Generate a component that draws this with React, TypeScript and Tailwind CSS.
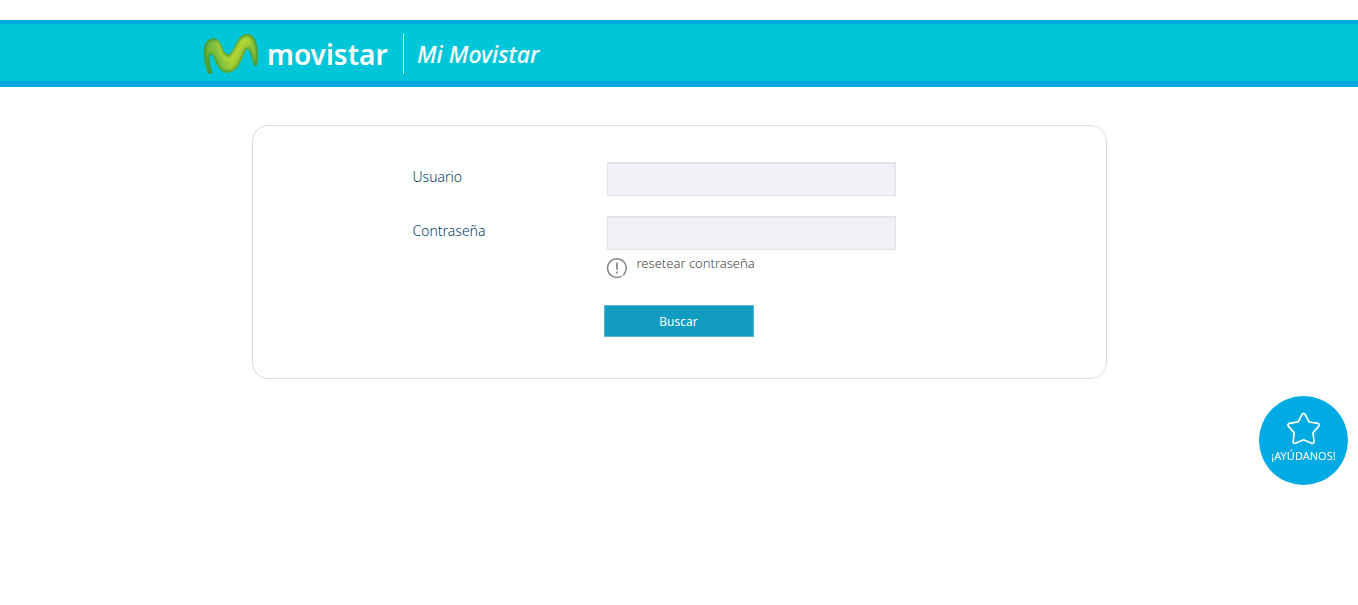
import React from "react";

const ribbon =
  "M30 132C24 132 21 124 18 112C11 88 9 64 14 47C19 32 31 25 42 25C55 25 60 37 67 53C73 65 77 73 84 73C93 72 99 59 106 45C115 27 126 13 142 12C158 12 167 27 171 46C174 64 175 88 172 103C170 111 164 110 161 103C157 92 154 76 148 62C145 54 140 54 136 63C130 78 124 97 113 111C103 122 93 128 81 128C66 127 56 115 48 98C43 87 39 75 34 73C29 72 27 82 29 95C31 109 36 120 36 127C36 131 33 133 30 132Z";

function MovistarMark() {
  return (
    <svg viewBox="9 9 168 126" className="h-[42px] w-14 shrink-0" aria-hidden="true">
      <defs>
        <linearGradient id="leaf" x1="0" y1="0" x2="1" y2="0">
          <stop offset="0" stopColor="#69b33a" />
          <stop offset="0.2" stopColor="#80c141" />
          <stop offset="0.38" stopColor="#8ac63c" />
          <stop offset="0.52" stopColor="#a5d033" />
          <stop offset="0.8" stopColor="#a6cf35" />
          <stop offset="1" stopColor="#7fbd38" />
        </linearGradient>
        <clipPath id="ribbon-shape">
          <path d={ribbon} />
        </clipPath>
        <filter id="soft">
          <feGaussianBlur stdDeviation="4" />
        </filter>
      </defs>
      <path d={ribbon} fill="url(#leaf)" />
      <g clipPath="url(#ribbon-shape)">
        <path d={ribbon} fill="none" stroke="#2f8733" strokeWidth="9" filter="url(#soft)" opacity="0.85" />
        <path
          d="M53 38C60 58 67 82 79 90C94 98 104 76 113 57C120 40 130 28 143 27"
          fill="none"
          stroke="#b5da38"
          strokeWidth="10"
          strokeLinecap="round"
          filter="url(#soft)"
          opacity="0.8"
        />
      </g>
    </svg>
  );
}

const field =
  "h-[34px] w-full rounded-none border border-t-2 border-[#e2e3e8] bg-[#f0f1f6] px-2 text-sm text-[#0b4a70] outline-none focus:border-[#119bc0]";

export default function App() {
  return (
    <div className="min-h-screen bg-white pt-5 font-['Noto_Sans',sans-serif]">
      <header className="border-t-4 border-b-6 border-[#00a9e0] bg-[#00c6d9]">
        <div className="mx-auto flex max-w-[952px] items-center pt-[9px] pb-1.5 text-white">
          <MovistarMark />
          <span className="ml-2 w-[136px] text-[28px] leading-8 font-semibold">movistar</span>
          <span className="h-10 w-px bg-white" />
          <span className="ml-[13px] text-[23px] leading-8 font-medium italic">Mi Movistar</span>
        </div>
      </header>

      <main className="mx-auto mt-[38px] max-w-[855px] rounded-2xl border border-[#dadada] pt-9 pb-[41px]">
        <form className="mx-auto max-w-[533px]" onSubmit={(e) => e.preventDefault()}>
          <div className="grid grid-cols-[194px_289px] gap-y-5 text-sm leading-[30px] font-light text-[#003f66]">
            <label htmlFor="usuario">Usuario</label>
            <input id="usuario" type="text" className={field} />
            <label htmlFor="clave">Contraseña</label>
            <input id="clave" type="password" className={field} />
          </div>
          <a href="#resetear" className="mt-1 ml-[194px] flex w-fit gap-[9px] text-[13px] leading-[18px] font-light text-[#444444]">
            <svg viewBox="0 0 22 22" className="mt-[3px] -ml-px size-[22px]" fill="none" stroke="#858585" aria-hidden="true">
              <path d="M17.8 17.3A9.3 9.3 0 1 0 15.6 19.1" strokeWidth="1.5" />
              <path d="M17 18.5l1.5-1" strokeWidth="1.3" />
              <path d="M11 5.5v7.3M11 14.5v2" strokeWidth="1.7" />
            </svg>
            resetear contraseña
          </a>
          <button
            type="submit"
            className="mt-[26px] ml-[191px] block h-8 w-[150px] cursor-pointer border border-[#58b7d1] bg-[#119bc0] pt-px text-xs text-white"
          >
            Buscar
          </button>
        </form>
      </main>

      <button
        type="button"
        className="fixed top-[396px] right-[10px] flex size-[89px] cursor-pointer flex-col items-center rounded-full bg-[#00abe4] pt-4 text-white"
      >
        <svg viewBox="0 0 34 34" className="size-[34px]" fill="none" stroke="currentColor" strokeWidth="1.7" strokeLinejoin="round" aria-hidden="true">
          <path d="M15.2 2.2Q16.6 .6 18 2.2L22 9.8 30.8 11.4Q33.2 12.2 31.8 14.1L26 20.7 27 29.5Q26.9 32 24.6 31.2L16.6 27.8 8.6 31.2Q6.3 32 6.2 29.5L7.2 20.7 1.4 14.1Q0 12.2 2.4 11.4L11.2 9.8Z" />
        </svg>
        <span className="text-[11px] leading-5">¡AYÚDANOS!</span>
      </button>
    </div>
  );
}
